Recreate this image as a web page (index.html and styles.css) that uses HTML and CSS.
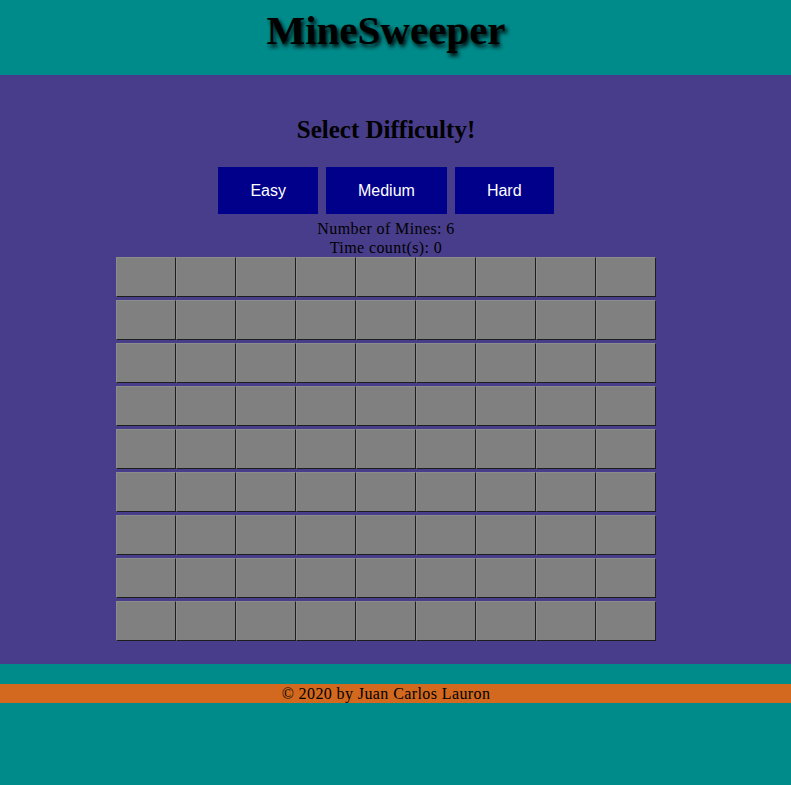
FILE: index.html
```html
<!DOCTYPE html>
<html>
<head>
<meta charset="utf-8">
<title>MineSweeper</title>
<link rel="stylesheet" href="styles.css">
</head>
<body>
<header class="top">
  <div class="wrap"><h1 class="title">MineSweeper</h1></div>
</header>
<main class="game">
  <div class="wrap">
    <h2 class="subtitle">Select Difficulty!</h2>
    <div class="levels">
      <button class="level">Easy</button>
      <button class="level">Medium</button>
      <button class="level">Hard</button>
    </div>
    <p class="info">Number of Mines: 6</p>
    <p class="info">Time count(s): 0</p>
    <div class="board" id="board"></div>
  </div>
</main>
<div class="gap"></div>
<footer class="foot">
  <div class="wrap">© 2020 by Juan Carlos Lauron</div>
</footer>
<script>
  var b = document.getElementById('board');
  for (var i = 0; i < 81; i++) {
    var c = document.createElement('div');
    c.className = 'cell';
    b.appendChild(c);
  }
</script>
</body>
</html>
```
FILE: styles.css
```css
html, body {
  margin: 0;
  padding: 0;
}
body {
  background: #008b8b;
  font-family: "Liberation Serif", "DejaVu Serif", serif;
  color: #000;
}
.wrap {
  width: 772px;
  display: flex;
  flex-direction: column;
  align-items: center;
}
.top {
  height: 75px;
  background: #008b8b;
}
.title {
  margin: 8px 0 0;
  font-size: 41px;
  line-height: 44px;
  font-weight: bold;
  text-shadow: 2px 3px 4px #000;
}
.game {
  background: #483d8b;
  height: 589px;
}
.subtitle {
  margin: 40px 0 0;
  font-size: 25px;
  line-height: 30px;
  font-weight: bold;
}
.levels {
  display: flex;
  gap: 8px;
  margin-top: 22px;
}
.level {
  background: #00008b;
  color: #fff;
  border: none;
  height: 47px;
  padding: 0 32px;
  font-family: "Liberation Sans", Arial, sans-serif;
  font-size: 16px;
}
.info {
  margin: 0;
  font-size: 16px;
  line-height: 19px;
  letter-spacing: 0.4px;
}
.levels + .info {
  margin-top: 5px;
}
.board {
  display: grid;
  grid-template-columns: repeat(9, 60px);
  row-gap: 3px;
}
.cell {
  box-sizing: border-box;
  height: 40px;
  background: #808080;
  border: 1px solid;
  border-color: #8c8c8c #1e1e1e #1e1e1e #8c8c8c;
}
.gap {
  height: 20px;
}
.foot {
  background: #d2691e;
  height: 19px;
  font-size: 16px;
  line-height: 19px;
  letter-spacing: 0.4px;
}
```
